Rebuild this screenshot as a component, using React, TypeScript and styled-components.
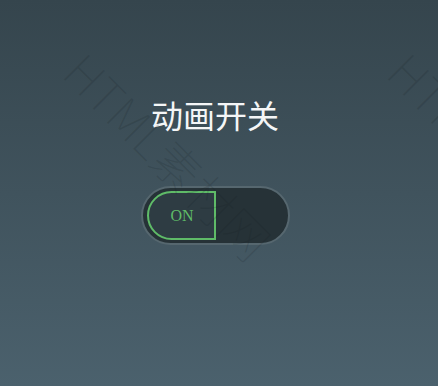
import React, { useState } from 'react';
import styled, { createGlobalStyle } from 'styled-components';

const GlobalStyle = createGlobalStyle`
  html, body {
    margin: 0;
    padding: 0;
  }
  body {
    font-family: "Liberation Serif", "Noto Sans CJK SC", serif;
  }
`;

const Page = styled.div`
  position: relative;
  overflow: hidden;
  width: 438px;
  height: 386px;
  box-sizing: border-box;
  padding: 94px 8px 0 0;
  background: linear-gradient(180deg, #35454d 0%, #40535d 50%, #4b616d 100%);
  display: flex;
  flex-direction: column;
  align-items: center;
`;

const Title = styled.h1`
  margin: 0;
  font-family: "Noto Sans CJK SC", sans-serif;
  font-weight: 400;
  font-size: 32px;
  line-height: 40px;
  color: #f4f6f7;
`;

const Track = styled.button<{ $on: boolean }>`
  margin-top: 52px;
  width: 149px;
  height: 59px;
  box-sizing: border-box;
  padding: 4px;
  border: 2px solid #56676f;
  border-radius: 30px;
  background: #263237;
  display: flex;
  justify-content: ${(p) => (p.$on ? 'flex-start' : 'flex-end')};
  align-items: center;
  cursor: pointer;
`;

const Knob = styled.span<{ $on: boolean }>`
  width: 69px;
  height: 49px;
  box-sizing: border-box;
  border: 2px solid ${(p) => (p.$on ? '#5fbb68' : '#b85c5c')};
  border-radius: ${(p) => (p.$on ? '25px 0 0 25px' : '0 25px 25px 0')};
  background: #2e3c43;
  display: flex;
  align-items: center;
  justify-content: center;
  color: ${(p) => (p.$on ? '#5fbb68' : '#b85c5c')};
  font-family: "Liberation Serif", serif;
  font-size: 16px;
  padding-left: 2px;
`;

const Watermark = styled.div<{ $x: number; $y: number }>`
  position: absolute;
  left: ${(p) => p.$x}px;
  top: ${(p) => p.$y}px;
  transform: rotate(45deg);
  transform-origin: 0 0;
  white-space: nowrap;
  font-family: "Noto Sans CJK SC", sans-serif;
  font-weight: 100;
  font-size: 48px;
  line-height: 48px;
  color: rgba(20, 30, 35, 0.17);
  pointer-events: none;
`;

export default function App() {
  const [on, setOn] = useState(true);
  return (
    <Page>
      <GlobalStyle />
      <Title>动画开关</Title>
      <Track $on={on} onClick={() => setOn(!on)}>
        <Knob $on={on}>{on ? 'ON' : 'OFF'}</Knob>
      </Track>
      <Watermark $x={92} $y={44}>HTML素材网</Watermark>
      <Watermark $x={416} $y={44}>HTML素材网</Watermark>
    </Page>
  );
}
